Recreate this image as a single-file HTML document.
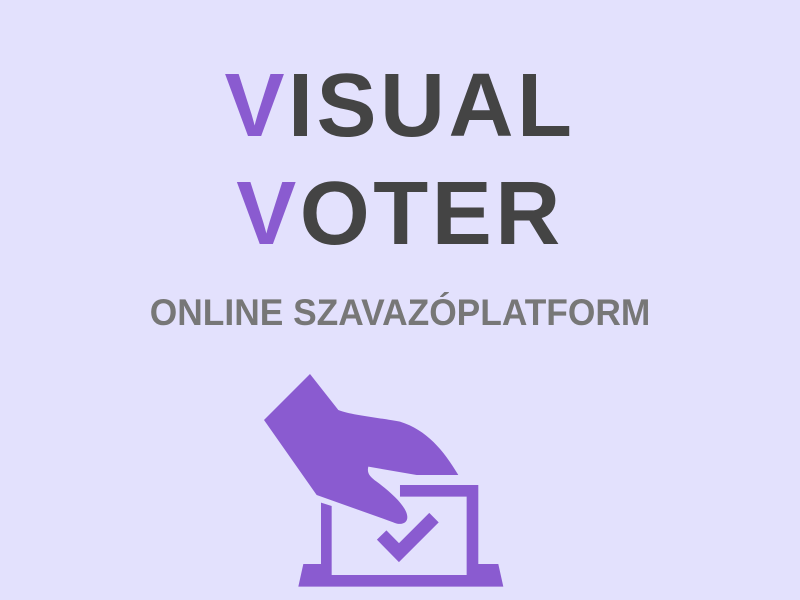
<!DOCTYPE html>
<html><head><meta charset="utf-8"><style>
html,body{margin:0;padding:0;}
body{width:800px;height:600px;background:#e3e1fd;position:relative;overflow:hidden;font-family:"Liberation Sans",sans-serif;}
.t{position:absolute;left:0;width:800px;text-align:center;font-size:90px;font-weight:bold;color:#444;line-height:1;letter-spacing:3.5px;}
.t span{color:#8a5bd0;}
.s{position:absolute;left:0;width:800px;text-align:center;top:294px;font-size:37px;font-weight:bold;color:#777;line-height:1;}
.s div{display:inline-block;transform:scaleX(0.955);white-space:nowrap;}
</style></head><body>
<div class="t" style="top:61px"><span>V</span>ISUAL</div>
<div class="t" style="top:169px"><span>V</span>OTER</div>
<div class="s"><div>ONLINE SZAVAZÓPLATFORM</div></div>
<svg width="800" height="600" style="position:absolute;left:0;top:0">
<g transform="translate(250,360) scale(0.3333)" fill="#8a5bd0">
<path d="M213,428 L245,438 L245,645 L650,645 L650,410 L450,410 L450,375 L685,375 L685,612 L745,612 L760,680 L145,680 L160,612 L213,612 Z"/>
<path d="M180,42 L265,150 C300,165 400,175 450,185 C530,210 580,270 625,345 L500,345 L355,320 C350,340 360,350 380,365 C420,395 460,430 470,460 C480,492 450,497 430,487 L200,405 L42,180 Z"/>
<polyline points="395,525 447,578 552,473" fill="none" stroke="#8a5bd0" stroke-width="40"/>
</g>
</svg>
</body></html>
